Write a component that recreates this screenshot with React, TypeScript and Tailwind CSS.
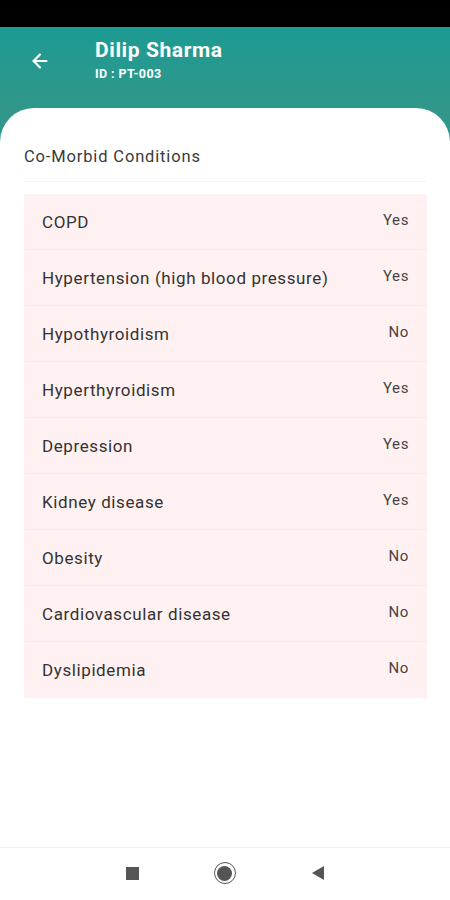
import { ArrowLeft } from 'lucide-react';

const conditions = [
  { name: 'COPD', value: 'Yes' },
  { name: 'Hypertension (high blood pressure)', value: 'Yes' },
  { name: 'Hypothyroidism', value: 'No' },
  { name: 'Hyperthyroidism', value: 'Yes' },
  { name: 'Depression', value: 'Yes' },
  { name: 'Kidney disease', value: 'Yes' },
  { name: 'Obesity', value: 'No' },
  { name: 'Cardiovascular disease', value: 'No' },
  { name: 'Dyslipidemia', value: 'No' },
];

function ConditionRow({ name, value, last }: { name: string; value: string; last: boolean }) {
  return (
    <div
      className={`flex h-[56px] items-center justify-between pl-[18px] pr-[18px] pt-[2px] ${
        last ? '' : 'border-b border-[#fbe6e6]'
      }`}
    >
      <span className="text-[17px] tracking-[0.6px] text-[#333333]">{name}</span>
      <span className="-mt-[5px] text-[15px] tracking-[0.6px] text-[#444444]">{value}</span>
    </div>
  );
}

export default function App() {
  return (
    <div className="flex h-[900px] w-[450px] flex-col overflow-hidden bg-white font-['Roboto',sans-serif]">
      {/* Status bar */}
      <div className="h-[27px] shrink-0 bg-black" />

      {/* Header */}
      <div className="shrink-0 bg-gradient-to-b from-[#1b9b93] to-[#30978a]">
        <div className="flex h-[81px] items-start pt-[9px]">
          <div className="flex w-[95px] justify-center pr-[16px] pt-[14px]">
            <ArrowLeft className="h-[22px] w-[22px] text-white" strokeWidth={2.4} />
          </div>
          <div className="flex flex-col">
            <span className="text-[21px] font-bold leading-[28px] tracking-[0.6px] text-white">Dilip Sharma</span>
            <span className="mt-[2px] text-[12.5px] font-bold leading-[16px] tracking-[0.4px] text-white">ID : PT-003</span>
          </div>
        </div>
      </div>

      {/* Card */}
      <div className="flex flex-1 flex-col bg-[#30978a]">
        <div className="flex flex-1 flex-col rounded-t-[34px] bg-white px-[24px]">
          <div className="flex h-[74px] items-end border-b border-[#f7f2ec] pb-[11px]">
            <span className="text-[16.5px] tracking-[0.85px] text-[#3a3a3a]">Co-Morbid Conditions</span>
          </div>
          <div className="mt-[12px] mr-[-1px] bg-[#fff1f1]">
            {conditions.map((c, i) => (
              <ConditionRow key={c.name} name={c.name} value={c.value} last={i === conditions.length - 1} />
            ))}
          </div>
          <div className="flex-1" />
        </div>
      </div>

      {/* Nav bar */}
      <div className="flex h-[53px] shrink-0 items-center justify-center gap-[75px] border-t border-[#f0f0f0] bg-white pb-[2px]">
        <div className="h-[13px] w-[13px] bg-[#555555]" />
        <div className="flex h-[22px] w-[22px] items-center justify-center rounded-full border-[1.5px] border-[#555555]">
          <div className="h-[15px] w-[15px] rounded-full bg-[#555555]" />
        </div>
        <svg width="14" height="16" viewBox="0 0 14 16">
          <polygon points="13,1 13,15 1,8" fill="#555555" />
        </svg>
      </div>
    </div>
  );
}
